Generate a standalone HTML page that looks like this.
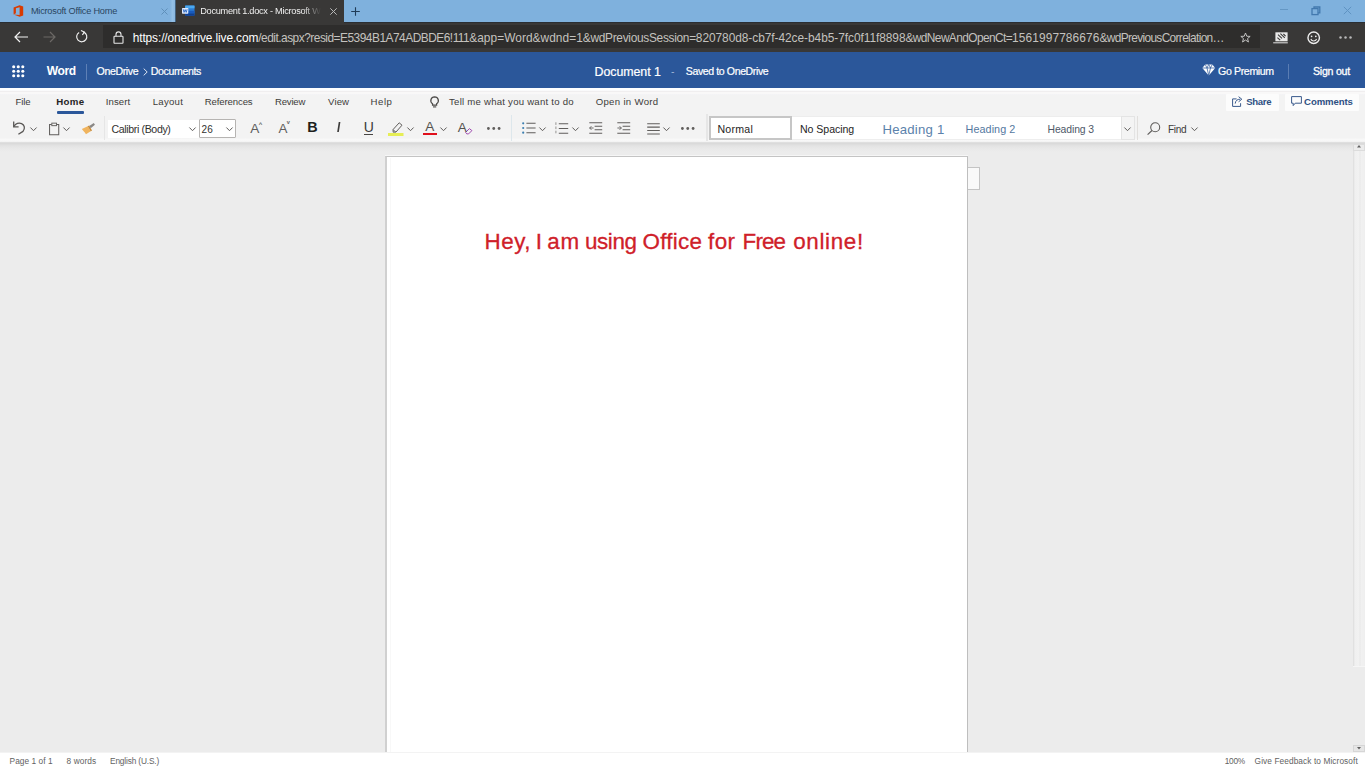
<!DOCTYPE html>
<html lang="en">
<head>
<meta charset="utf-8">
<title>Document 1.docx - Microsoft Word Online</title>
<style>
*{box-sizing:border-box;margin:0;padding:0}
html,body{width:1365px;height:768px;overflow:hidden;background:#ececec;font-family:"Liberation Sans",sans-serif;}
.a{position:absolute}
.t{position:absolute;white-space:pre;line-height:1;font-family:"Liberation Sans",sans-serif}
svg{position:absolute;overflow:visible}
#tabbar{position:absolute;left:0;top:0;width:1365px;height:23px;background:#7fb1dd}
#tab1{position:absolute;left:0;top:0;width:176px;height:22px;background:linear-gradient(90deg,#81b2de 0,#81b2de 170px,#93bfe5 172.5px,#8ab8e1 174.6px,#3c5872 175.6px,#393837 176px)}
#tab2{position:absolute;left:176px;top:0;width:167.8px;height:23px;background:#393837}
#addr{position:absolute;left:0;top:22px;width:1365px;height:30px;background:#393837}
#addr:before{content:"";position:absolute;left:0;top:0;width:175.5px;height:1.4px;background:#2a2e33}
#addr:after{content:"";position:absolute;left:343.8px;top:0;width:1022px;height:1.4px;background:#2a2e33}
#urlbox{position:absolute;left:103px;top:25px;width:1157px;height:23px;background:#2e2d2c}
#hdr{position:absolute;left:0;top:52px;width:1365px;height:36px;background:#2b579a}
#ribbon{position:absolute;left:0;top:88px;width:1365px;height:54.2px;background:linear-gradient(#fdfeff 0,#fdfeff 2.4px,#f0eeef 2.8px,#f0eeef 4px,#f9f8f8 4.4px,#f9f8f8 5.6px,#f4f4f7 6px,#f3f3f3 7.5px,#f3f3f3 50px,#f8f8f8 51.2px,#f7f7f7 53.2px,#ececec 54.2px)}
#ribshadow{position:absolute;left:0;top:142.2px;width:1365px;height:10px;background:linear-gradient(#e4e4e4 0,#d9d9d9 1.1px,#dcdcdc 2px,#e4e4e4 4px,#e9e9e9 7px,#ececec 10px)}
#page{position:absolute;left:385px;top:156px;width:583px;height:620px;background:#fff;border:1px solid #c4c4c4;border-left:2px solid #d0d0d0;border-right:1px solid #bebebe;box-shadow:0 -1px 0 #f6f6f6}
#pagetab{position:absolute;left:967.5px;top:167px;width:12.5px;height:22.5px;background:#f9f9f9;border:1.3px solid #c4c4c4;border-left:none}
#status{position:absolute;left:0;top:752px;width:1365px;height:16px;background:#fff;border-top:1px solid #f3f3f3}
#vthumb{position:absolute;left:1352.5px;top:150px;width:12.5px;height:517px;background:linear-gradient(90deg,#dcdcdc 0,#f0f0f0 2px,#f2f2f2 6px,#e8e8e8 7px,#f1f1f1 8px,#efefef 100%);border-bottom:1px solid #f6f6f6}
.btnw{position:absolute;background:#fcfcfc;border-radius:1px}
.vsep{position:absolute;width:1px;background:#d2d0ce}
</style>
</head>
<body>
<div id="tabbar">
  <div id="tab1"></div>
  <div id="tab2"></div>
</div>
<div id="addr"></div>
<div id="urlbox"></div>
<div id="hdr"></div>
<div id="ribbon"></div>
<div id="ribshadow"></div>
<div id="vthumb"></div>
<div id="page"></div>
<div id="pagetab"></div>
<div class="a" style="left:390px;top:158px;width:1px;height:594px;background:#f8f8f8"></div>
<div id="status"></div>

<!-- ===== browser chrome icons ===== -->
<!-- office favicon -->
<svg style="left:13px;top:5px" width="11" height="12" viewBox="0 0 11 12"><path d="M0.6 2.6 L6.6 0.3 L10.2 1.4 V10.6 L6.6 11.7 L0.6 9.4 L6.6 10.1 V2.3 L2.9 3.3 V8.2 L0.6 9.4 Z" fill="#d83b01"/></svg>
<!-- tab1 close -->
<svg style="left:160.5px;top:8px" width="7" height="7" viewBox="0 0 7 7"><path d="M0.5 0.5 L6.5 6.5 M6.5 0.5 L0.5 6.5" stroke="#5f8fb9" stroke-width="1" fill="none"/></svg>
<!-- word favicon -->
<svg style="left:182.2px;top:4.6px" width="12.8" height="11.4" viewBox="0 0 13 11"><rect x="3.2" y="0.3" width="9.5" height="10.4" rx="0.8" fill="#2b7cd3"/><rect x="3.2" y="0.3" width="9.5" height="2.8" fill="#4aa8f0"/><rect x="3.2" y="5.6" width="9.5" height="2.6" fill="#185abd"/><rect x="3.2" y="8.2" width="9.5" height="2.5" fill="#103f91"/><rect x="0" y="2.7" width="6.4" height="5.8" rx="0.6" fill="#dfeaff"/><path d="M1.2 4 L2.1 7.2 L3.2 4.4 L4.3 7.2 L5.2 4" stroke="#185abd" stroke-width="0.8" fill="none"/></svg>
<!-- tab2 close -->
<svg style="left:330px;top:7.8px" width="7" height="7" viewBox="0 0 7 7"><path d="M0.3 0.3 L6.7 6.7 M6.7 0.3 L0.3 6.7" stroke="#b9b9b9" stroke-width="1" fill="none"/></svg>
<!-- new tab plus -->
<svg style="left:351.2px;top:7.2px" width="9" height="9" viewBox="0 0 9 9"><path d="M4.5 0.2 V8.8 M0.2 4.5 H8.8" stroke="#1f3b57" stroke-width="1.1" fill="none"/></svg>
<!-- window controls -->
<svg style="left:1279px;top:3.2px" width="10" height="12" viewBox="0 0 10 12"><path d="M1 6.5 H9" stroke="#6497c4" stroke-width="1"/></svg>
<svg style="left:1310.5px;top:5.5px" width="10" height="10" viewBox="0 0 10 10"><rect x="1" y="2.6" width="6" height="6" fill="none" stroke="#4379ae" stroke-width="1.3"/><path d="M3 2.6 V1 H8.8 V6.8 H7" fill="none" stroke="#4379ae" stroke-width="1.3"/></svg>
<svg style="left:1342.5px;top:6px" width="9" height="9" viewBox="0 0 9 9"><path d="M0.8 0.8 L8.2 8.2 M8.2 0.8 L0.8 8.2" stroke="#5f93c2" stroke-width="1" fill="none"/></svg>
<!-- back -->
<svg style="left:14px;top:30.8px" width="14.5" height="12" viewBox="0 0 14.5 12"><path d="M14 6 H1 M6 1 L1 6 L6 11" stroke="#f2f2f2" stroke-width="1.2" fill="none"/></svg>
<!-- forward -->
<svg style="left:42.5px;top:30.8px" width="13" height="12" viewBox="0 0 13 12"><path d="M0.5 6 H12 M7 1 L12 6 L7 11" stroke="#6c6966" stroke-width="1.2" fill="none"/></svg>
<!-- refresh -->
<svg style="left:75.3px;top:30.3px" width="13.4" height="13.4" viewBox="0 0 14 14"><path d="M9.2 2.2 A5.3 5.3 0 1 1 4.3 2.5" stroke="#f2f2f2" stroke-width="1.2" fill="none"/><path d="M6.2 0.6 L9.6 2.1 L7.8 5.2" stroke="#f2f2f2" stroke-width="1.2" fill="none"/></svg>
<!-- lock -->
<svg style="left:112.5px;top:31px" width="11" height="13" viewBox="0 0 11 13"><rect x="1" y="5.3" width="9" height="7" rx="0.6" fill="none" stroke="#e6e6e6" stroke-width="1.1"/><path d="M3 5.3 V3.4 A2.5 2.5 0 0 1 8 3.4 V5.3" fill="none" stroke="#e6e6e6" stroke-width="1.1"/></svg>
<!-- star -->
<svg style="left:1239.5px;top:31.7px" width="11" height="11" viewBox="0 0 13 13"><path d="M6.5 1.2 L8 5 L12 5.2 L8.9 7.8 L10 11.8 L6.5 9.5 L3 11.8 L4.1 7.8 L1 5.2 L5 5 Z" fill="none" stroke="#c4c4c4" stroke-width="1.15"/></svg>
<!-- hub / reading list -->
<svg style="left:1272.8px;top:31.8px" width="15" height="11.6" viewBox="0 0 15 11.6"><rect x="2.4" y="0.3" width="12.2" height="9" fill="#e9e9e9"/><path d="M5 2.6 L9 6.4 M7.4 1.6 L11.8 5.8 M4.4 5.6 L7.2 8.2 M10.4 2 L12.6 4.2" stroke="#3a3938" stroke-width="1.1" fill="none"/><path d="M0.2 10.8 H14.8" stroke="#d8d8d8" stroke-width="1.1"/></svg>
<!-- smiley -->
<svg style="left:1307px;top:30.8px" width="13.4" height="13.4" viewBox="0 0 14 14"><circle cx="7" cy="7" r="6" fill="none" stroke="#ededed" stroke-width="1.5"/><circle cx="4.8" cy="5.6" r="0.9" fill="#ededed"/><circle cx="9.2" cy="5.6" r="0.9" fill="#ededed"/><path d="M4 8.4 A3.2 3.2 0 0 0 10 8.4" fill="none" stroke="#ededed" stroke-width="1.1"/></svg>
<!-- more -->
<svg style="left:1338.5px;top:35.9px" width="13" height="3" viewBox="0 0 13 3"><circle cx="1.5" cy="1.5" r="1.25" fill="#b8b8b8"/><circle cx="6.5" cy="1.5" r="1.25" fill="#b8b8b8"/><circle cx="11.5" cy="1.5" r="1.25" fill="#b8b8b8"/></svg>

<!-- ===== word header icons ===== -->
<svg style="left:11.5px;top:65px" width="12.5" height="12.5" viewBox="0 0 12.5 12.5" fill="#fff"><circle cx="1.7" cy="1.7" r="1.55"/><circle cx="6.25" cy="1.7" r="1.55"/><circle cx="10.8" cy="1.7" r="1.55"/><circle cx="1.7" cy="6.25" r="1.55"/><circle cx="6.25" cy="6.25" r="1.55"/><circle cx="10.8" cy="6.25" r="1.55"/><circle cx="1.7" cy="10.8" r="1.55"/><circle cx="6.25" cy="10.8" r="1.55"/><circle cx="10.8" cy="10.8" r="1.55"/></svg>
<div class="a" style="left:86.3px;top:64px;width:1px;height:15.5px;background:#5e80b6"></div>
<svg style="left:143px;top:67.5px" width="5" height="8" viewBox="0 0 5 8"><path d="M0.7 0.6 L4.2 4 L0.7 7.4" stroke="#dfe7f3" stroke-width="1" fill="none"/></svg>
<!-- diamond -->
<svg style="left:1202.3px;top:63.8px" width="13.5" height="11.8" viewBox="0 0 13.5 11.8"><path d="M3.2 0.4 H10.3 L13.2 4 L6.75 11.5 L0.3 4 Z" fill="#fff"/><path d="M0.3 4 H13.2 M3.2 0.4 L5 4 L6.75 11.5 L8.5 4 L10.3 0.4 M6.75 0.4 L5 4 M6.75 0.4 L8.5 4" stroke="#2b579a" stroke-width="0.75" fill="none"/></svg>
<div class="a" style="left:1287.8px;top:64px;width:1px;height:14.5px;background:#5a7db3"></div>

<!-- ===== ribbon tab row ===== -->
<div class="a" style="left:57px;top:111.4px;width:27.3px;height:2.5px;background:#2b579a;border-radius:1px"></div>
<!-- lightbulb -->
<svg style="left:430.2px;top:95.6px" width="9.2" height="12" viewBox="0 0 9 11.6"><path d="M4.5 0.7 A3.7 3.7 0 0 1 6.5 7.5 V8.8 H2.5 V7.5 A3.7 3.7 0 0 1 4.5 0.7 Z" fill="none" stroke="#4a4846" stroke-width="1.2"/><path d="M2.9 10.6 H6.1" stroke="#4a4846" stroke-width="1.1"/></svg>
<div class="btnw" style="left:1226px;top:93.5px;width:52.5px;height:17px"></div>
<div class="btnw" style="left:1284.5px;top:93.5px;width:74.5px;height:17px"></div>
<!-- share icon -->
<svg style="left:1232px;top:96.3px" width="11" height="11" viewBox="0 0 11 11"><path d="M4.6 2.9 H0.6 V10.4 H8.6 V7.2" fill="none" stroke="#3a5a8c" stroke-width="1"/><path d="M3.2 7.6 C3.4 4.6 5.4 3.2 8.2 3.2 M6.6 0.7 L9.8 3.2 L6.6 5.8" fill="none" stroke="#3a5a8c" stroke-width="1"/></svg>
<!-- comments icon -->
<svg style="left:1290.5px;top:96px" width="11" height="10.5" viewBox="0 0 11 10.5"><path d="M0.6 0.6 H10.4 V7.2 H4.2 L2.2 9.6 V7.2 H0.6 Z" fill="none" stroke="#3a5a8c" stroke-width="1"/></svg>

<!-- ===== toolbar row ===== -->
<!-- undo -->
<svg style="left:12.8px;top:121.2px" width="12.5" height="13.5" viewBox="0 0 12.5 13.5"><path d="M0.7 0.6 V5.8 H5.6" fill="none" stroke="#5a5856" stroke-width="1.3"/><path d="M0.9 5.5 C2.6 2.4 6 1.4 8.6 2.6 C11.6 4 12.4 7.6 10 10.4 L5.4 13.3" fill="none" stroke="#5a5856" stroke-width="1.3"/></svg>
<svg style="left:29.6px;top:126.5px" width="7" height="4.5" viewBox="0 0 7 4.5"><path d="M0.4 0.5 L3.5 3.7 L6.6 0.5" stroke="#605e5c" stroke-width="1" fill="none"/></svg>
<!-- clipboard -->
<svg style="left:48.8px;top:121.8px" width="10.3" height="13.8" viewBox="0 0 11 13.5"><path d="M3 2 H0.6 V12.9 H10.4 V2 H8" fill="none" stroke="#605e5c" stroke-width="1.1"/><rect x="3" y="0.6" width="5" height="2.7" fill="#f3f3f3" stroke="#605e5c" stroke-width="1"/></svg>
<svg style="left:63px;top:126.5px" width="7" height="4.5" viewBox="0 0 7 4.5"><path d="M0.4 0.5 L3.5 3.7 L6.6 0.5" stroke="#605e5c" stroke-width="1" fill="none"/></svg>
<!-- format painter -->
<svg style="left:80.8px;top:121.8px" width="14.6" height="13" viewBox="0 0 13.5 11.5"><path d="M0.8 6.2 L6.2 3.6 L9 8.4 L4.6 11 C3.2 9 1.6 7.2 0.8 6.2 Z" fill="#f0b45e"/><path d="M6.2 3.6 L9 8.4 L10.2 7.7 L7.5 3 Z" fill="#c98a35"/><path d="M7.6 3.4 L11.8 0.6 L12.9 2.2 L9 5.6 Z" fill="#8a8886"/></svg>
<div class="vsep" style="left:104.4px;top:116px;height:24px;background:#e6e6e6"></div>
<!-- font name + size boxes -->
<div class="a" style="left:107.5px;top:119.5px;width:91.5px;height:18.5px;background:#fff"></div>
<div class="a" style="left:198.5px;top:119.3px;width:37px;height:18.8px;background:#fff;border:1.2px solid #b6b4b2;border-radius:1px"></div>
<svg style="left:189.2px;top:126.5px" width="7" height="4.5" viewBox="0 0 7 4.5"><path d="M0.4 0.5 L3.5 3.7 L6.6 0.5" stroke="#605e5c" stroke-width="1" fill="none"/></svg>
<svg style="left:225.5px;top:126.5px" width="7" height="4.5" viewBox="0 0 7 4.5"><path d="M0.4 0.5 L3.5 3.7 L6.6 0.5" stroke="#605e5c" stroke-width="1" fill="none"/></svg>
<div class="vsep" style="left:510.5px;top:115px;height:26px;background:#dde7ec"></div>
<div class="vsep" style="left:705.6px;top:113.5px;height:27.5px;width:2px;background:#e6e6e6"></div>
<!-- highlight -->
<svg style="left:388px;top:121.5px" width="16" height="14.5" viewBox="0 0 16 14.5"><rect x="0" y="11" width="15.5" height="3" fill="#e6ee55"/><path d="M11.2 0.8 L14 3.2 L8 10 L5.2 10.2 L5 7.6 Z" fill="none" stroke="#605e5c" stroke-width="1"/><path d="M5.2 7.8 L7.8 10" stroke="#605e5c" stroke-width="0.9"/></svg>
<svg style="left:406.8px;top:126.5px" width="7" height="4.5" viewBox="0 0 7 4.5"><path d="M0.4 0.5 L3.5 3.7 L6.6 0.5" stroke="#605e5c" stroke-width="1" fill="none"/></svg>
<!-- font colour bar -->
<div class="a" style="left:423.3px;top:132.6px;width:14.2px;height:2.7px;background:#e0101c"></div>
<svg style="left:440.3px;top:126.5px" width="7" height="4.5" viewBox="0 0 7 4.5"><path d="M0.4 0.5 L3.5 3.7 L6.6 0.5" stroke="#605e5c" stroke-width="1" fill="none"/></svg>
<!-- eraser on clear formatting -->
<svg style="left:464.5px;top:128.3px" width="7.5" height="6.5" viewBox="0 0 7.5 6.5"><path d="M4.4 0.6 L6.9 2.6 L3.6 5.9 H1.8 L0.6 4.4 Z" fill="#f3f3f3" stroke="#a04cb0" stroke-width="1"/></svg>
<!-- more dots 1 -->
<svg style="left:486.5px;top:126.6px" width="13.5" height="3" viewBox="0 0 13.5 3" fill="#605e5c"><circle cx="1.4" cy="1.5" r="1.4"/><circle cx="6.75" cy="1.5" r="1.4"/><circle cx="12.1" cy="1.5" r="1.4"/></svg>
<!-- bullets -->
<svg style="left:521.5px;top:122.3px" width="14" height="12" viewBox="0 0 14 12"><circle cx="1.2" cy="1.3" r="1.1" fill="#3c7fb1"/><circle cx="1.2" cy="6" r="1.1" fill="#3c7fb1"/><circle cx="1.2" cy="10.7" r="1.1" fill="#3c7fb1"/><path d="M4.4 1.3 H13.6 M4.4 6 H13.6 M4.4 10.7 H13.6" stroke="#605e5c" stroke-width="1.1"/></svg>
<svg style="left:538.5px;top:126.5px" width="7" height="4.5" viewBox="0 0 7 4.5"><path d="M0.4 0.5 L3.5 3.7 L6.6 0.5" stroke="#605e5c" stroke-width="1" fill="none"/></svg>
<!-- numbering -->
<svg style="left:555px;top:121.8px" width="13.5" height="13" viewBox="0 0 13.5 13"><path d="M0.9 0.3 V12.7" stroke="#8a8886" stroke-width="0.9" stroke-dasharray="2.6 1.6"/><path d="M3.8 1.8 H13.2 M3.8 6.5 H13.2 M3.8 11.2 H13.2" stroke="#605e5c" stroke-width="1.1"/></svg>
<svg style="left:572px;top:126.5px" width="7" height="4.5" viewBox="0 0 7 4.5"><path d="M0.4 0.5 L3.5 3.7 L6.6 0.5" stroke="#605e5c" stroke-width="1" fill="none"/></svg>
<!-- outdent -->
<svg style="left:589px;top:122.3px" width="13.5" height="12" viewBox="0 0 13.5 12"><path d="M0.3 0.8 H13.2 M5.6 4.3 H13.2 M5.6 7.7 H13.2 M0.3 11.2 H13.2" stroke="#605e5c" stroke-width="1.1"/><path d="M4.6 6 H0.6 M2.4 4.2 L0.6 6 L2.4 7.8" stroke="#605e5c" stroke-width="0.9" fill="none"/></svg>
<!-- indent -->
<svg style="left:616.8px;top:122.3px" width="13.5" height="12" viewBox="0 0 13.5 12"><path d="M0.3 0.8 H13.2 M5.6 4.3 H13.2 M5.6 7.7 H13.2 M0.3 11.2 H13.2" stroke="#605e5c" stroke-width="1.1"/><path d="M0.4 6 H4.4 M2.6 4.2 L4.4 6 L2.6 7.8" stroke="#605e5c" stroke-width="0.9" fill="none"/></svg>
<!-- align -->
<svg style="left:646.7px;top:122.6px" width="13" height="11.5" viewBox="0 0 13 11.5"><path d="M0.2 0.7 H12.8 M0.2 4.1 H12.8 M0.2 7.5 H12.8 M0.2 10.9 H12.8" stroke="#605e5c" stroke-width="1.05"/></svg>
<svg style="left:662.5px;top:126.5px" width="7" height="4.5" viewBox="0 0 7 4.5"><path d="M0.4 0.5 L3.5 3.7 L6.6 0.5" stroke="#605e5c" stroke-width="1" fill="none"/></svg>
<!-- more dots 2 -->
<svg style="left:680.5px;top:126.6px" width="13.5" height="3" viewBox="0 0 13.5 3" fill="#605e5c"><circle cx="1.4" cy="1.5" r="1.4"/><circle cx="6.75" cy="1.5" r="1.4"/><circle cx="12.1" cy="1.5" r="1.4"/></svg>
<!-- style gallery -->
<div class="a" style="left:710px;top:116.6px;width:410.8px;height:22.6px;background:#fff;box-shadow:0 0 0 0.8px #ebebeb"></div>
<div class="a" style="left:709.2px;top:115.8px;width:82.6px;height:24.5px;background:#fff;border:2.4px solid #c6c6c6"></div>
<div class="a" style="left:1120.8px;top:116px;width:14.4px;height:24px;background:#f4f4f4;border:1px solid #e4e4e4"></div>
<svg style="left:1124px;top:126.5px" width="7" height="4.5" viewBox="0 0 7 4.5"><path d="M0.4 0.5 L3.5 3.7 L6.6 0.5" stroke="#605e5c" stroke-width="1" fill="none"/></svg>
<div class="vsep" style="left:1137px;top:116px;height:24px;background:#e1dfdd"></div>
<!-- find -->
<svg style="left:1147.4px;top:122px" width="13.5" height="13" viewBox="0 0 13.5 13"><circle cx="8.2" cy="5.2" r="4.5" fill="none" stroke="#605e5c" stroke-width="1.1"/><path d="M5 8.5 L0.6 12.6" stroke="#605e5c" stroke-width="1.2"/></svg>
<svg style="left:1191px;top:126.5px" width="7" height="4.5" viewBox="0 0 7 4.5"><path d="M0.4 0.5 L3.5 3.7 L6.6 0.5" stroke="#605e5c" stroke-width="1" fill="none"/></svg>

<!-- scrollbar arrows -->
<div class="a" style="left:1352.5px;top:143.5px;width:12.5px;height:7px;background:#ececec;border:1px solid #dcdcdc"></div>
<svg style="left:1357px;top:145.4px" width="4" height="2.6" viewBox="0 0 5 3"><path d="M0 3 L2.5 0 L5 3 Z" fill="#606060"/></svg>
<div class="a" style="left:1352.5px;top:745px;width:12.5px;height:7px;background:#e6e6e6;border:1px solid #d6d6d6"></div>
<svg style="left:1357px;top:747.2px" width="4" height="2.6" viewBox="0 0 5 3"><path d="M0 0 L2.5 3 L5 0 Z" fill="#606060"/></svg>

<!-- ===== glyph buttons in toolbar (real text) ===== -->
<span class="t" style="left:250.2px;top:122px;font-size:13.6px;color:#605e5c">A</span>
<span class="t" style="left:258.8px;top:121.4px;font-size:6px;font-weight:700;color:#605e5c">^</span>
<span class="t" style="left:278.4px;top:122.3px;font-size:13.4px;color:#605e5c">A</span>
<span class="t" style="left:286.8px;top:119.6px;font-size:5.6px;font-weight:700;color:#605e5c">v</span>
<span class="t" style="left:307.3px;top:120.3px;font-size:14.4px;font-weight:700;color:#201f1e">B</span>
<span class="t" style="left:337.4px;top:120.3px;font-size:14.4px;font-style:italic;font-weight:700;color:#3b3a39;transform:scaleX(0.8);transform-origin:left">I</span>
<span class="t" style="left:363.7px;top:120.4px;font-size:14px;color:#3b3a39">U</span>
<div class="a" style="left:364.3px;top:133.8px;width:9.2px;height:1.1px;background:#484644"></div>
<span class="t" style="left:425.3px;top:120.3px;font-size:13.6px;color:#55534f">A</span>
<span class="t" style="left:457.8px;top:120.5px;font-size:13.6px;color:#55534f">A</span>

<!-- ===== all calibrated text ===== -->
<span class="t" style="left:30.9px;top:7.0px;font-size:9.2px;color:#2a4560;letter-spacing:-0.218px;">Microsoft Office Home</span>
<span class="t" style="left:200.2px;top:7.0px;font-size:9.2px;color:#f0f0f0;letter-spacing:-0.268px;-webkit-mask-image:linear-gradient(90deg,#000 85%,transparent);">Document 1.docx - Microsoft W</span>
<span class="t" style="left:46.7px;top:65.0px;font-size:12.06px;color:#ffffff;font-weight:700;letter-spacing:-0.367px;">Word</span>
<span class="t" style="left:96.6px;top:66.0px;font-size:10.6px;color:#ffffff;letter-spacing:-0.393px;-webkit-text-stroke:0.2px #fff;">OneDrive</span>
<span class="t" style="left:150.7px;top:66.0px;font-size:10.6px;color:#ffffff;letter-spacing:-0.356px;-webkit-text-stroke:0.2px #fff;">Documents</span>
<span class="t" style="left:594.6px;top:66.0px;font-size:12.4px;color:#ffffff;letter-spacing:-0.067px;-webkit-text-stroke:0.2px #fff;">Document 1</span>
<span class="t" style="left:671.1px;top:67.0px;font-size:10.4px;color:#9fb4d6;">-</span>
<span class="t" style="left:685.8px;top:66.0px;font-size:10.56px;color:#ffffff;letter-spacing:-0.391px;-webkit-text-stroke:0.2px #fff;">Saved to OneDrive</span>
<span class="t" style="left:1218.1px;top:66.0px;font-size:10.6px;color:#ffffff;letter-spacing:-0.378px;-webkit-text-stroke:0.2px #fff;">Go Premium</span>
<span class="t" style="left:1313.0px;top:66.0px;font-size:10.6px;color:#ffffff;letter-spacing:-0.250px;-webkit-text-stroke:0.3px #fff;">Sign out</span>
<span class="t" style="left:15.4px;top:97.0px;font-size:9.6px;color:#3d3c3a;letter-spacing:-0.117px;">File</span>
<span class="t" style="left:56.2px;top:97.0px;font-size:9.69px;color:#252423;font-weight:700;letter-spacing:0.383px;">Home</span>
<span class="t" style="left:105.8px;top:97.0px;font-size:9.6px;color:#3d3c3a;letter-spacing:0.090px;">Insert</span>
<span class="t" style="left:152.8px;top:97.0px;font-size:9.6px;color:#3d3c3a;letter-spacing:0.240px;">Layout</span>
<span class="t" style="left:204.8px;top:97.0px;font-size:9.6px;color:#3d3c3a;letter-spacing:-0.133px;">References</span>
<span class="t" style="left:274.9px;top:97.0px;font-size:9.6px;color:#3d3c3a;letter-spacing:-0.190px;">Review</span>
<span class="t" style="left:328.1px;top:97.0px;font-size:9.6px;color:#3d3c3a;letter-spacing:0.100px;">View</span>
<span class="t" style="left:370.6px;top:97.0px;font-size:9.6px;color:#3d3c3a;letter-spacing:0.517px;">Help</span>
<span class="t" style="left:449.1px;top:97.0px;font-size:9.6px;color:#3d3c3a;letter-spacing:0.233px;">Tell me what you want to do</span>
<span class="t" style="left:595.7px;top:97.0px;font-size:9.6px;color:#3d3c3a;letter-spacing:0.318px;">Open in Word</span>
<span class="t" style="left:1246.2px;top:97.0px;font-size:9.6px;color:#2f5083;font-weight:700;letter-spacing:-0.325px;">Share</span>
<span class="t" style="left:1304.1px;top:97.0px;font-size:9.6px;color:#2f5083;font-weight:700;letter-spacing:-0.114px;">Comments</span>
<span class="t" style="left:111.5px;top:124.0px;font-size:10.6px;color:#323130;letter-spacing:-0.369px;">Calibri (Body)</span>
<span class="t" style="left:201.5px;top:125.0px;font-size:10.0px;color:#323130;letter-spacing:0.100px;">26</span>
<span class="t" style="left:717.5px;top:124.0px;font-size:10.6px;color:#252423;letter-spacing:0.220px;">Normal</span>
<span class="t" style="left:800.0px;top:124.0px;font-size:10.6px;color:#252423;letter-spacing:-0.061px;">No Spacing</span>
<span class="t" style="left:882.5px;top:123.0px;font-size:13.2px;color:#5b82ab;letter-spacing:0.206px;">Heading 1</span>
<span class="t" style="left:965.5px;top:124.0px;font-size:10.8px;color:#54789f;letter-spacing:0.081px;">Heading 2</span>
<span class="t" style="left:1047.5px;top:125.0px;font-size:10.4px;color:#4e5868;letter-spacing:-0.094px;">Heading 3</span>
<span class="t" style="left:1168.0px;top:125.0px;font-size:10.15px;color:#3d3c3a;letter-spacing:-0.367px;">Find</span>
<span class="t" style="left:9.6px;top:757.0px;font-size:8.3px;color:#626262;letter-spacing:0.060px;">Page 1 of 1</span>
<span class="t" style="left:66.5px;top:757.0px;font-size:8.3px;color:#626262;letter-spacing:0.117px;">8 words</span>
<span class="t" style="left:110.0px;top:757.0px;font-size:8.3px;color:#626262;letter-spacing:-0.154px;">English (U.S.)</span>
<span class="t" style="left:1224.7px;top:757.0px;font-size:8.3px;color:#626262;letter-spacing:-0.233px;">100%</span>
<span class="t" style="left:1254.6px;top:757.0px;font-size:8.3px;color:#626262;letter-spacing:0.086px;">Give Feedback to Microsoft</span>
<span class="t" style="left:484.6px;top:231.0px;font-size:22.4px;color:#cf2029;letter-spacing:0.467px;-webkit-text-stroke:0.3px #cf2029;">Hey,</span>
<span class="t" style="left:535.7px;top:231.0px;font-size:22.4px;color:#cf2029;-webkit-text-stroke:0.3px #cf2029;">I</span>
<span class="t" style="left:547.3px;top:231.0px;font-size:22.4px;color:#cf2029;letter-spacing:0.700px;-webkit-text-stroke:0.3px #cf2029;">am</span>
<span class="t" style="left:584.9px;top:231.0px;font-size:22.4px;color:#cf2029;letter-spacing:-0.375px;-webkit-text-stroke:0.3px #cf2029;">using</span>
<span class="t" style="left:642.5px;top:231.0px;font-size:22.4px;color:#cf2029;letter-spacing:0.280px;-webkit-text-stroke:0.3px #cf2029;">Office</span>
<span class="t" style="left:708.1px;top:231.0px;font-size:22.4px;color:#cf2029;letter-spacing:0.325px;-webkit-text-stroke:0.3px #cf2029;">for</span>
<span class="t" style="left:742.6px;top:231.0px;font-size:22.4px;color:#cf2029;letter-spacing:-0.867px;-webkit-text-stroke:0.3px #cf2029;">Free</span>
<span class="t" style="left:793.2px;top:231.0px;font-size:22.4px;color:#cf2029;letter-spacing:0.667px;-webkit-text-stroke:0.3px #cf2029;">online!</span>
<span class="t" style="left:132.7px;top:33.0px;font-size:11.9px;"><span style="color:#ffffff;letter-spacing:-0.107px">https://onedrive.live.com</span><span style="color:#c4c2bf;letter-spacing:-0.494px">/edit.aspx?resid=E5394B1A74ADBDE6!111</span><span style="color:#c4c2bf;letter-spacing:0.048px">&amp;app=Word&amp;wdnd=1</span><span style="color:#c4c2bf;letter-spacing:-0.297px">&amp;wdPreviousSession=</span><span style="color:#c4c2bf;letter-spacing:-0.046px">820780d8-cb7f-42ce-b4b5-7fc0f11f8898</span><span style="color:#c4c2bf;letter-spacing:-0.594px">&amp;wdNewAndOpenCt=</span><span style="color:#c4c2bf;letter-spacing:0.117px">1561997786676</span><span style="color:#c4c2bf;letter-spacing:-0.659px">&amp;wdPreviousCorrelation…</span></span>
</body>
</html>
